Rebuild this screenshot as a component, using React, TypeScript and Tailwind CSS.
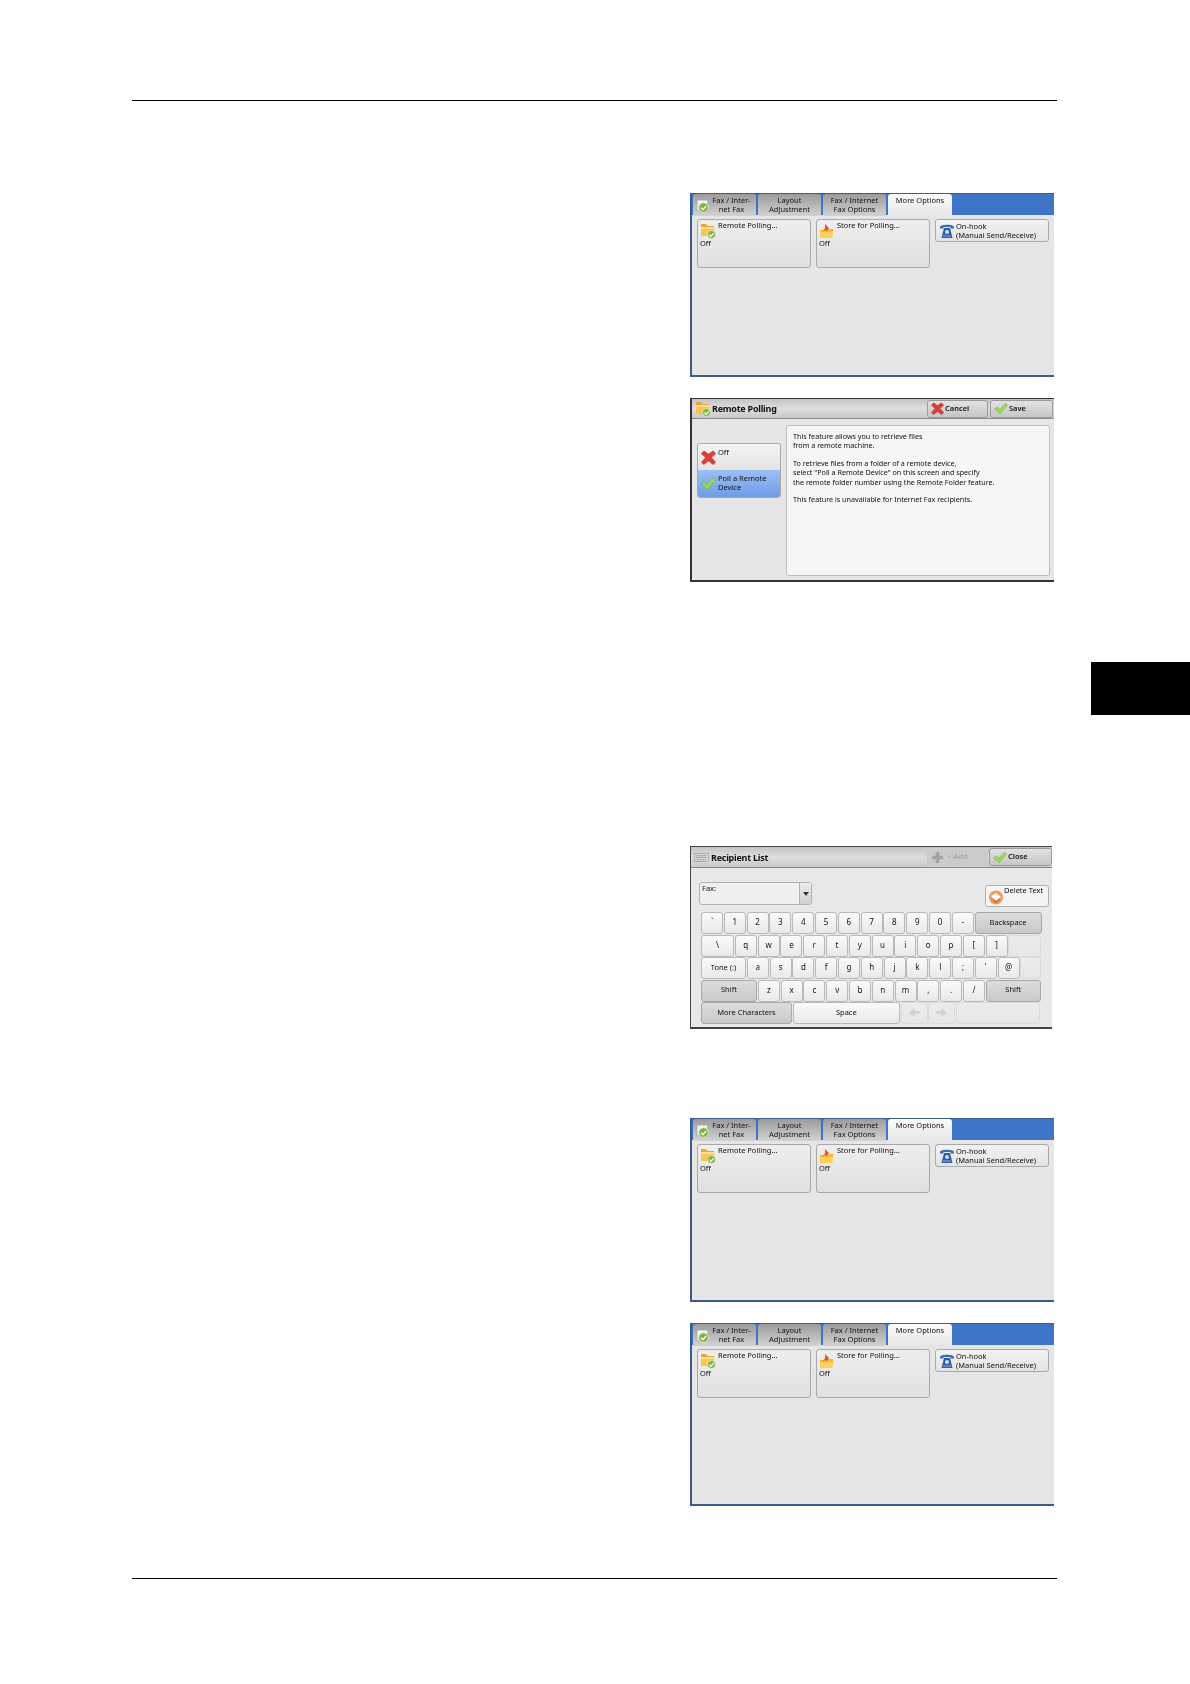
const tabLabels = [['Fax / Inter-', 'net Fax'], ['Layout', 'Adjustment'], ['Fax / Internet', 'Fax Options']];

function CheckBadge({ cx, cy, r }: { cx: number; cy: number; r: number }) {
  return (
    <g>
      <circle cx={cx} cy={cy} r={r} fill="#7cb342" stroke="#e8f3d0" strokeWidth="0.8" />
      <path d={`M${cx - r * 0.5} ${cy}l${r * 0.4} ${r * 0.45} ${r * 0.65} -${r * 0.8}`} fill="none" stroke="#fff" strokeWidth="1.2" />
    </g>
  );
}

function FolderIcon() {
  return (
    <svg viewBox="0 0 16 16" className="w-4 h-4 shrink-0">
      <path d="M1 1h5l1.500 2H14v4H1z" fill="#e8a63a" />
      <path d="M1 4h13.500l-1 9H1z" fill="#fbc64f" />
      <path d="M1 4h13.500l-.3 2H1z" fill="#fde08c" />
      <CheckBadge cx={11.500} cy={11.500} r={4} />
    </svg>
  );
}

function StoreIcon() {
  return (
    <svg viewBox="0 0 16 16" className="w-4 h-4 shrink-0">
      <path d="M1 7h5l1-1h7.500L13 15H1z" fill="#fbb92f" />
      <path d="M1.500 9h12.500l-1 6H1z" fill="#fdd05a" />
      <path d="M6 1l4 4-2.500 3.500-1-1.500-3 1 2.500-2.500z" fill="#e2572b" />
    </svg>
  );
}

function PhoneIcon() {
  return (
    <svg viewBox="0 0 16 16" className="w-4 h-4 shrink-0">
      <path d="M1 4c0-3 14-3 14 0v1.500h-3.500V4h-7v1.500H1z" fill="#3d6db5" />
      <path d="M5 5h6l2.500 10h-11z" fill="#2e5ca6" />
      <circle cx="8" cy="9" r="2" fill="#cfe0f5" />
      <rect x="4" y="12.500" width="8" height="1" fill="#8fb0de" />
    </svg>
  );
}

function TabIcon() {
  return (
    <svg viewBox="0 0 14 14" className="w-[15px] h-[15px] shrink-0 mt-[5px]">
      <rect x="1" y="1" width="10" height="10" fill="#f4f4f4" stroke="#999" strokeWidth="0.5" />
      <CheckBadge cx={7} cy={8} r={4.500} />
    </svg>
  );
}

function CrossIcon({ className }: { className: string }) {
  return (
    <svg viewBox="0 0 16 16" className={className}>
      <path d="M3 .5l5 3.500 5-3.500 3 3.500L11.500 8 16 13l-3 3-5-4-5 4-3-3 4.500-5L0 4z" fill="#d8403a" />
    </svg>
  );
}

function TickIcon({ className }: { className: string }) {
  return (
    <svg viewBox="0 0 16 16" className={className}>
      <path d="M0 8.500l3.500-2.500 3 3L13.500 1.500 16 4 7 14.500z" fill="#9bd654" stroke="#6da838" strokeWidth="0.5" />
    </svg>
  );
}

function EraserIcon() {
  return (
    <svg viewBox="0 0 16 16" className="w-4 h-4 shrink-0 mt-[3px]">
      <circle cx="8" cy="8.500" r="7" fill="#ee9a5a" />
      <path d="M3 7l5-3 5 4-5 4z" fill="#fff" />
      <path d="M5 10l3 2 4-3v2l-4 3-3-2z" fill="#d9662a" />
    </svg>
  );
}

function KeyboardIcon() {
  return (
    <svg viewBox="0 0 16 10" className="w-[15px] h-[9px] shrink-0">
      <rect x="0.500" y="0.500" width="15" height="9" fill="#d8d8d8" stroke="#8a8a8a" strokeWidth="0.6" />
      <path d="M2 3h12M2 5h12M3 7.500h10" stroke="#777" strokeWidth="0.9" strokeDasharray="1 0.7" />
    </svg>
  );
}

function ArrowIcon({ flip }: { flip?: boolean }) {
  return (
    <svg viewBox="0 0 12 10" className={flip ? 'w-[11px] h-[9px] rotate-180' : 'w-[11px] h-[9px]'}>
      <path d="M0 3.500h6V0l6 5-6 5V6.500H0z" fill="#d0d0d0" />
    </svg>
  );
}

function OptionButton({ icon, title, className }: { icon: React.ReactNode; title: string; className: string }) {
  return (
    <div className={`h-[49px] rounded-[3px] border border-[#a9a9a9] bg-linear-to-b from-[#eeeeee] to-[#e0e0e0] pl-[2px] pt-[3px] ${className}`}>
      <div className="flex items-start gap-[2px]">
        {icon}
        <span className="leading-[9px] mt-[-2px] whitespace-nowrap">{title}</span>
      </div>
      <div className="leading-[9px]">Off</div>
    </div>
  );
}

function OptionsPanel({ height = 'h-[184px]' }: { height?: string }) {
  return (
    <div className={`w-[364px] border-l-2 border-t border-b-2 border-[#3b5c8c] bg-[#e6e6e6] blur-[0.35px] ${height}`}>
      <div className="flex h-[21px] bg-[#3f74c8] pl-[1px]">
        {tabLabels.map((label, i) => (
          <div key={i} className={`h-[22px] w-[63px] mr-[2px] rounded-t-[3px] bg-linear-to-b from-[#9c9c9c] to-[#d2d2d2] flex justify-center ${i === 0 ? 'gap-[1px] pr-[2px]' : ''}`}>
            {i === 0 && <TabIcon />}
            <div className="text-center leading-[9px] pt-[2px] whitespace-nowrap">
              <div>{label[0]}</div>
              <div>{label[1]}</div>
            </div>
          </div>
        ))}
        <div className="h-[22px] w-[64px] rounded-t-[3px] bg-linear-to-b from-[#fbfbfb] to-[#e6e6e6] text-center leading-[9px] pt-[2px]">More Options</div>
      </div>
      <div className="flex items-start gap-[5px] pl-[5px] pt-[4px]">
        <OptionButton icon={<FolderIcon />} title="Remote Polling..." className="w-[114px]" />
        <OptionButton icon={<StoreIcon />} title="Store for Polling..." className="w-[114px]" />
        <div className="w-[114px] h-[23px] rounded-[3px] border border-[#a9a9a9] bg-linear-to-b from-[#f2f2f2] to-[#e4e4e4] flex gap-[1px] pl-[3px] pt-[3px]">
          <PhoneIcon />
          <div className="leading-[9px] mt-[-1px] whitespace-nowrap">
            <div>On-hook</div>
            <div>(Manual Send/Receive)</div>
          </div>
        </div>
      </div>
    </div>
  );
}

function HeaderButton({ icon, label, className }: { icon: React.ReactNode; label: string; className: string }) {
  return (
    <div className={`h-[18px] rounded-[3px] border border-[#9a9a9a] bg-linear-to-b from-[#e2e2e2] to-[#c6c6c6] flex items-center gap-[1px] pl-[3px] font-semibold ${className}`}>
      {icon}
      <span>{label}</span>
    </div>
  );
}

function PollingPanel() {
  return (
    <div className="w-[364px] h-[184px] border-l-2 border-t border-b-2 border-[#333333] bg-[#e6e6e6] mt-[21px] blur-[0.35px]">
      <div className="h-[20px] bg-linear-to-b from-[#c4c4c4] via-[#dedede] to-[#c8c8c8] border-b border-[#8a8a8a] flex items-center pl-[3px]">
        <FolderIcon />
        <span className="text-[9px] font-bold tracking-[-0.25px] ml-[1px] mt-[1px] text-[#111111]">Remote Polling</span>
        <HeaderButton icon={<CrossIcon className="w-[13px] h-[13px]" />} label="Cancel" className="w-[61px] ml-auto" />
        <HeaderButton icon={<TickIcon className="w-[14px] h-[13px]" />} label="Save" className="w-[63px] ml-[2px] mr-[1px]" />
      </div>
      <div className="flex items-start pl-[5px] pr-[4px] pt-[6px]">
        <div className="w-[84px] mt-[18px] mr-[5px] rounded-[3px] border border-[#a9a9a9]">
          <div className="h-[26px] bg-linear-to-b from-[#f4f4f4] to-[#e4e4e4] rounded-t-[3px] flex gap-[2px] pl-[3px] pt-[4px]">
            <CrossIcon className="w-[15px] h-[15px] mt-[2px]" />
            <span className="leading-[9px]">Off</span>
          </div>
          <div className="h-[27px] bg-linear-to-b from-[#9cc0f4] to-[#6f9ce8] rounded-b-[3px] flex gap-[2px] pl-[3px] pt-[4px]">
            <TickIcon className="w-[15px] h-[15px] mt-[2px]" />
            <span className="leading-[9px]">Poll a Remote<br />Device</span>
          </div>
        </div>
        <div className="w-[264px] h-[151px] rounded-[3px] border border-[#bdbdbd] bg-[#f6f6f6] pl-[6px] pt-[6px] text-[7.200px] leading-[9.300px]">
          <p>This feature allows you to retrieve files</p>
          <p>from a remote machine.</p>
          <p className="mt-[8.500px]">To retrieve files from a folder of a remote device,</p>
          <p>select "Poll a Remote Device" on this screen and specify</p>
          <p>the remote folder number using the Remote Folder feature.</p>
          <p className="mt-[8.500px]">This feature is unavailable for Internet Fax recipients.</p>
        </div>
      </div>
    </div>
  );
}

function Key({ label, className = 'w-[22px]', tone = 'light' }: { label?: React.ReactNode; className?: string; tone?: 'light' | 'gray' | 'blank' }) {
  const look = {
    light: 'from-[#fafafa] to-[#e9e9e9] border-[#b9b9b9]',
    gray: 'from-[#dcdcdc] to-[#c9c9c9] border-[#a8a8a8]',
    blank: 'from-[#ececec] to-[#e6e6e6] border-[#dcdcdc]',
  }[tone];
  return (
    <div className={`h-[22px] shrink-0 rounded-[3px] border bg-linear-to-b flex items-center justify-center pb-[1.500px] ${look} ${className}`}>
      {label}
    </div>
  );
}

const row1 = ['`', '1', '2', '3', '4', '5', '6', '7', '8', '9', '0', '-'];
const row2 = ['q', 'w', 'e', 'r', 't', 'y', 'u', 'i', 'o', 'p', '[', ']'];
const row3 = ['a', 's', 'd', 'f', 'g', 'h', 'j', 'k', 'l', ';', "'", '@'];
const row4 = ['z', 'x', 'c', 'v', 'b', 'n', 'm', ',', '.', '/'];

function KeyboardPanel() {
  return (
    <div className="w-[362px] h-[183px] border-l border-t border-b-2 border-[#444444] bg-[#e8e8e8] mt-[264px] blur-[0.35px]">
      <div className="h-[21px] bg-linear-to-b from-[#c4c4c4] via-[#dedede] to-[#cacaca] border-b border-[#8a8a8a] flex items-center pl-[3px]">
        <KeyboardIcon />
        <span className="text-[9px] font-bold tracking-[-0.25px] ml-[2px] mt-[1px] text-[#111111]">Recipient List</span>
        <div className="w-[61px] h-[18px] ml-auto rounded-[3px] bg-[#cbcbcb] flex items-center gap-[3px] pl-[4px] text-[#a8a8a8] font-semibold">
          <svg viewBox="0 0 14 14" className="w-[13px] h-[13px]">
            <path d="M5 1h4v4h4v4H9v4H5V9H1V5h4z" fill="#a4a4a4" />
          </svg>
          <span>+ Add</span>
        </div>
        <HeaderButton icon={<TickIcon className="w-[14px] h-[13px]" />} label="Close" className="w-[63px] ml-[1px]" />
      </div>
      <div className="flex justify-between pl-[8px] pr-[3px] pt-[14px]">
        <div className="w-[113px] h-[23px] rounded-[3px] border border-[#b0b0b0] bg-[#f0f0f0] flex justify-between">
          <span className="leading-[9px] pl-[2px] pt-[1px]">Fax:</span>
          <div className="w-[12px] border-l border-[#b0b0b0] bg-linear-to-b from-[#ececec] to-[#d0d0d0] flex items-center justify-center">
            <div className="w-0 h-0 border-x-[3px] border-x-transparent border-t-[4px] border-t-[#333333]" />
          </div>
        </div>
        <div className="w-[64px] h-[22px] mt-[3px] rounded-[3px] border border-[#b0b0b0] bg-[#f4f4f4] flex pl-[2px] gap-0">
          <EraserIcon />
          <span className="leading-[9px] whitespace-nowrap">Delete Text</span>
        </div>
      </div>
      <div className="flex flex-col gap-[0.6px] pl-[10px] pt-[5px] text-[8px]">
        <div className="flex gap-[0.8px]">
          {row1.map((k) => <Key key={k} label={k} />)}
          <Key label="Backspace" className="w-[67px] text-[7.500px]" tone="gray" />
        </div>
        <div className="flex gap-[0.8px]">
          <Key label="\" className="w-[33px]" />
          {row2.map((k) => <Key key={k} label={k} />)}
          <Key className="w-[33px]" tone="blank" />
        </div>
        <div className="flex gap-[0.8px]">
          <Key label="Tone (:)" className="w-[45px] text-[7.500px]" />
          {row3.map((k) => <Key key={k} label={k} />)}
          <Key className="w-[21px]" tone="blank" />
        </div>
        <div className="flex gap-[0.8px]">
          <Key label="Shift" className="w-[56px] text-[7.500px]" tone="gray" />
          {row4.map((k) => <Key key={k} label={k} />)}
          <Key label="Shift" className="w-[55px] text-[7.500px]" tone="gray" />
        </div>
        <div className="flex gap-[0.8px]">
          <Key label="More Characters" className="w-[91px] text-[7.500px]" tone="gray" />
          <Key label="Space" className="w-[107px] text-[7.500px]" />
          <Key label={<ArrowIcon flip />} className="w-[27px]" tone="blank" />
          <Key label={<ArrowIcon />} className="w-[27px]" tone="blank" />
          <Key className="w-[84px]" tone="blank" />
        </div>
      </div>
    </div>
  );
}

export default function App() {
  return (
    <div className="w-[1190px] h-[1684px] bg-white pt-[100px] text-[7.500px] text-[#111111] [font-family:'Noto_Sans',sans-serif] overflow-hidden">
      <div className="ml-[132px] w-[925px] h-px bg-black" />
      <div className="flex">
        <div className="w-[1091px] pl-[690px] pt-[92px]">
          <OptionsPanel />
          <PollingPanel />
          <KeyboardPanel />
          <div className="mt-[89px]"><OptionsPanel /></div>
          <div className="mt-[21px]"><OptionsPanel height="h-[183px]" /></div>
        </div>
        <div className="w-[99px] h-[53px] mt-[561px] bg-black" />
      </div>
      <div className="ml-[132px] mt-[72px] w-[925px] h-px bg-black" />
    </div>
  );
}
